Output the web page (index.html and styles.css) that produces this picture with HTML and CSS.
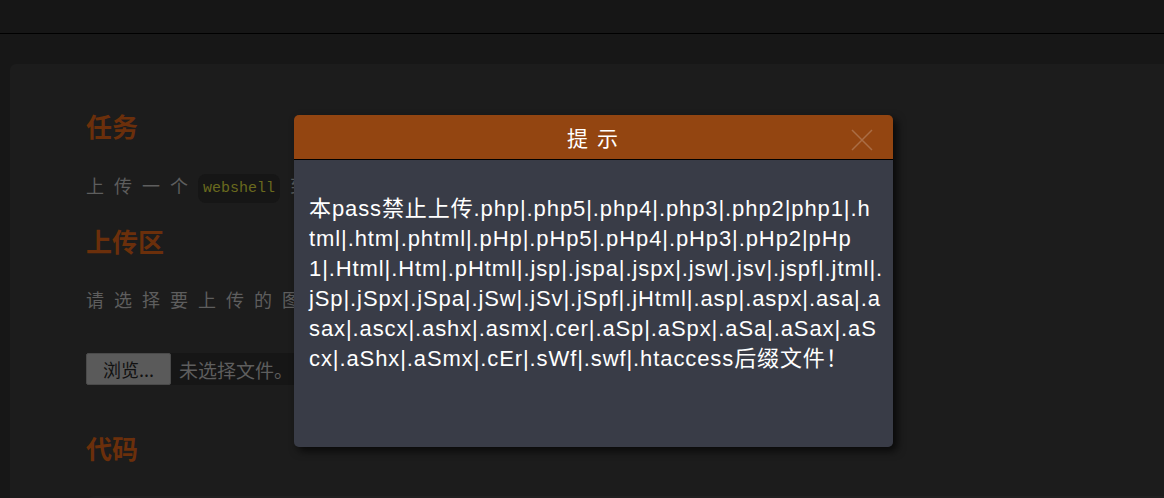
FILE: index.html
```html
<!DOCTYPE html>
<html lang="zh-CN">
<head>
<meta charset="utf-8">
<title>Pass</title>
<link rel="stylesheet" href="styles.css">
</head>
<body>
<header class="topbar"></header>
<main class="page">
  <section class="card">
    <h2 class="heading">任务</h2>
    <p class="line">上传一个<code class="code">webshell</code>到服务器。</p>
    <h2 class="heading">上传区</h2>
    <p class="line">请选择要上传的图片：</p>
    <div class="file">
      <span class="file-btn">浏览...</span>
      <span class="file-name">未选择文件。</span>
    </div>
    <h2 class="heading heading-code">代码</h2>
    <div class="codeblock"></div>
  </section>
</main>
<div class="modal">
  <div class="modal-head">
    <span class="modal-title">提示</span>
    <svg class="modal-close" width="22" height="22" viewBox="0 0 22 22"><path d="M1 1L21 21M21 1L1 21" stroke="rgba(255,255,255,0.22)" stroke-width="1.5" fill="none"/></svg>
  </div>
  <div class="modal-body">本pass禁止上传.php|.php5|.php4|.php3|.php2|php1|.h<br>tml|.htm|.phtml|.pHp|.pHp5|.pHp4|.pHp3|.pHp2|pHp<br>1|.Html|.Htm|.pHtml|.jsp|.jspa|.jspx|.jsw|.jsv|.jspf|.jtml|.<br>jSp|.jSpx|.jSpa|.jSw|.jSv|.jSpf|.jHtml|.asp|.aspx|.asa|.a<br>sax|.ascx|.ashx|.asmx|.cer|.aSp|.aSpx|.aSa|.aSax|.aS<br>cx|.aShx|.aSmx|.cEr|.sWf|.swf|.htaccess后缀文件！</div>
</div>
</body>
</html>
```
FILE: styles.css
```css
html, body {
  margin: 0;
  padding: 0;
  height: 100%;
  overflow: hidden;
}
body {
  background: #171717;
  font-family: "Noto Sans CJK SC", "Liberation Sans", sans-serif;
  position: relative;
}
.topbar {
  height: 33px;
  background: #161616;
  border-bottom: 1px solid #000;
}
.page {
  padding: 30px 0 0 10px;
}
.card {
  background: #1c1c1c;
  border-radius: 6px 0 0 0;
  padding: 44px 0 0 76px;
  height: 600px;
}
.heading {
  margin: 0;
  font-size: 26px;
  line-height: 36px;
  font-weight: 700;
  color: #6b2f0b;
}
.line {
  margin: 26px 0 20px;
  font-size: 18px;
  line-height: 30px;
  letter-spacing: 10px;
  color: #5e5e5e;
  white-space: nowrap;
}
.line + .heading {
  margin-top: 0;
}
.heading + .line + .heading + .line {
  margin-top: 25px;
}
.code {
  display: inline-block;
  font-family: "Liberation Mono", monospace;
  font-size: 15px;
  line-height: 29px;
  letter-spacing: 0;
  color: #6a6a1e;
  background: #161616;
  border-radius: 8px;
  padding: 0 5px;
  margin-right: 10px;
  vertical-align: 1px;
}
.file {
  display: flex;
  width: fit-content;
  height: 32px;
  background: #161616;
  margin-top: 39px;
}
.file-btn {
  display: flex;
  align-items: center;
  padding: 0 16px;
  background: #5a5a5a;
  border: 1px solid #4a4a4a;
  border-radius: 2px;
  color: #111;
  font-size: 18px;
}
.file-name {
  display: flex;
  align-items: center;
  padding: 0 8px 0 8px;
  color: #5e5e5e;
  font-size: 19px;
}
.heading-code {
  margin-top: 45px;
}
.codeblock {
  margin-top: 30px;
  height: 40px;
  background: #202020;
  border-radius: 8px 0 0 0;
}
.modal {
  position: absolute;
  left: 294px;
  top: 115px;
  width: 599px;
  border-radius: 5px;
  overflow: hidden;
  box-shadow: 4px 4px 8px rgba(0, 0, 0, 0.7);
}
.modal-head {
  position: relative;
  height: 44px;
  background: #934511;
  border-bottom: 1px solid #000;
  display: flex;
  align-items: center;
  justify-content: center;
}
.modal-title {
  color: #fff;
  font-size: 21px;
  letter-spacing: 9px;
  padding-left: 7px;
}
.modal-close {
  position: absolute;
  right: 20px;
  top: 14px;
}
.modal-body {
  box-sizing: border-box;
  height: 287px;
  background: #393c47;
  padding: 34px 8px 0 15px;
  color: #fff;
  font-family: "Liberation Sans", "Noto Sans CJK SC", sans-serif;
  font-size: 22px;
  letter-spacing: 0.9px;
  line-height: 30px;
  white-space: nowrap;
}
```
